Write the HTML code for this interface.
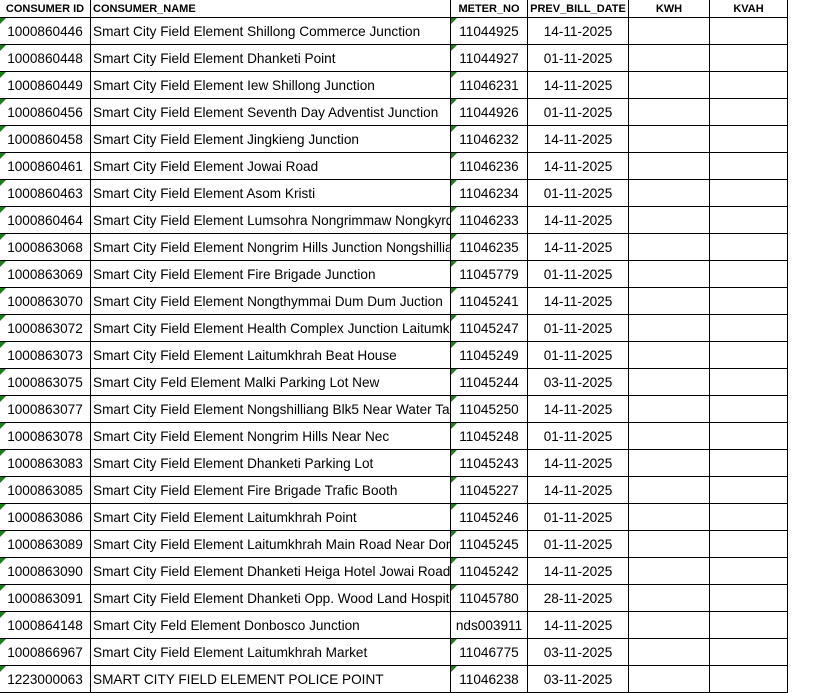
<!DOCTYPE html>
<html><head><meta charset="utf-8"><style>
body{margin:0;background:#fff;width:819px;height:693px;overflow:hidden;font-family:"Liberation Sans",Arial,sans-serif;}
table{border-collapse:collapse;table-layout:fixed;position:absolute;left:-1px;top:-1px;width:788px;}
td{border:1px solid #000;height:26px;padding:0;font-size:13.6px;color:#000;white-space:nowrap;overflow:hidden;text-align:center;position:relative;}
tr.h td{height:17px;font-weight:bold;font-size:11px;border-top-color:#dde3ea;}
td.n{text-align:left;padding-left:2px;text-overflow:clip;}
td.g::before{content:"";position:absolute;left:0;top:0;border-top:6px solid #1e7b1e;border-right:6px solid transparent;}
</style></head><body>
<table>
<colgroup><col style="width:91px"><col style="width:360px"><col style="width:77px"><col style="width:101px"><col style="width:81px"><col style="width:78px"></colgroup>
<tr class="h"><td>CONSUMER ID</td><td class="n">CONSUMER_NAME</td><td>METER_NO</td><td>PREV_BILL_DATE</td><td>KWH</td><td>KVAH</td></tr>
<tr><td class="g">1000860446</td><td class="n">Smart City Field Element Shillong Commerce Junction</td><td class="g">11044925</td><td>14-11-2025</td><td></td><td></td></tr>
<tr><td class="g">1000860448</td><td class="n">Smart City Field Element Dhanketi Point</td><td class="g">11044927</td><td>01-11-2025</td><td></td><td></td></tr>
<tr><td class="g">1000860449</td><td class="n">Smart City Field Element Iew Shillong Junction</td><td class="g">11046231</td><td>14-11-2025</td><td></td><td></td></tr>
<tr><td class="g">1000860456</td><td class="n">Smart City Field Element Seventh Day Adventist Junction</td><td class="g">11044926</td><td>01-11-2025</td><td></td><td></td></tr>
<tr><td class="g">1000860458</td><td class="n">Smart City Field Element Jingkieng Junction</td><td class="g">11046232</td><td>14-11-2025</td><td></td><td></td></tr>
<tr><td class="g">1000860461</td><td class="n">Smart City Field Element Jowai Road</td><td class="g">11046236</td><td>14-11-2025</td><td></td><td></td></tr>
<tr><td class="g">1000860463</td><td class="n">Smart City Field Element Asom Kristi</td><td class="g">11046234</td><td>01-11-2025</td><td></td><td></td></tr>
<tr><td class="g">1000860464</td><td class="n">Smart City Field Element Lumsohra Nongrimmaw Nongkyrdem</td><td class="g">11046233</td><td>14-11-2025</td><td></td><td></td></tr>
<tr><td class="g">1000863068</td><td class="n">Smart City Field Element Nongrim Hills Junction Nongshilliang</td><td class="g">11046235</td><td>14-11-2025</td><td></td><td></td></tr>
<tr><td class="g">1000863069</td><td class="n">Smart City Field Element Fire Brigade Junction</td><td class="g">11045779</td><td>01-11-2025</td><td></td><td></td></tr>
<tr><td class="g">1000863070</td><td class="n">Smart City Field Element Nongthymmai Dum Dum Juction</td><td class="g">11045241</td><td>14-11-2025</td><td></td><td></td></tr>
<tr><td class="g">1000863072</td><td class="n">Smart City Field Element Health Complex Junction Laitumkhrah</td><td class="g">11045247</td><td>01-11-2025</td><td></td><td></td></tr>
<tr><td class="g">1000863073</td><td class="n">Smart City Field Element Laitumkhrah Beat House</td><td class="g">11045249</td><td>01-11-2025</td><td></td><td></td></tr>
<tr><td class="g">1000863075</td><td class="n">Smart City Feld Element Malki Parking Lot New</td><td class="g">11045244</td><td>03-11-2025</td><td></td><td></td></tr>
<tr><td class="g">1000863077</td><td class="n">Smart City Field Element Nongshilliang Blk5 Near Water Tank</td><td class="g">11045250</td><td>14-11-2025</td><td></td><td></td></tr>
<tr><td class="g">1000863078</td><td class="n">Smart City Field Element Nongrim Hills Near Nec</td><td class="g">11045248</td><td>01-11-2025</td><td></td><td></td></tr>
<tr><td class="g">1000863083</td><td class="n">Smart City Field Element Dhanketi Parking Lot</td><td class="g">11045243</td><td>14-11-2025</td><td></td><td></td></tr>
<tr><td class="g">1000863085</td><td class="n">Smart City Field Element Fire Brigade Trafic Booth</td><td class="g">11045227</td><td>14-11-2025</td><td></td><td></td></tr>
<tr><td class="g">1000863086</td><td class="n">Smart City Field Element Laitumkhrah Point</td><td class="g">11045246</td><td>01-11-2025</td><td></td><td></td></tr>
<tr><td class="g">1000863089</td><td class="n">Smart City Field Element Laitumkhrah Main Road Near Don Bosco</td><td class="g">11045245</td><td>01-11-2025</td><td></td><td></td></tr>
<tr><td class="g">1000863090</td><td class="n">Smart City Field Element Dhanketi Heiga Hotel Jowai Road</td><td class="g">11045242</td><td>14-11-2025</td><td></td><td></td></tr>
<tr><td class="g">1000863091</td><td class="n">Smart City Field Element Dhanketi Opp. Wood Land Hospital</td><td class="g">11045780</td><td>28-11-2025</td><td></td><td></td></tr>
<tr><td class="g">1000864148</td><td class="n">Smart City Feld Element Donbosco Junction</td><td>nds003911</td><td>14-11-2025</td><td></td><td></td></tr>
<tr><td class="g">1000866967</td><td class="n">Smart City Field Element Laitumkhrah Market</td><td class="g">11046775</td><td>03-11-2025</td><td></td><td></td></tr>
<tr><td class="g">1223000063</td><td class="n">SMART CITY FIELD ELEMENT POLICE POINT</td><td class="g">11046238</td><td>03-11-2025</td><td></td><td></td></tr>
</table>
</body></html>
